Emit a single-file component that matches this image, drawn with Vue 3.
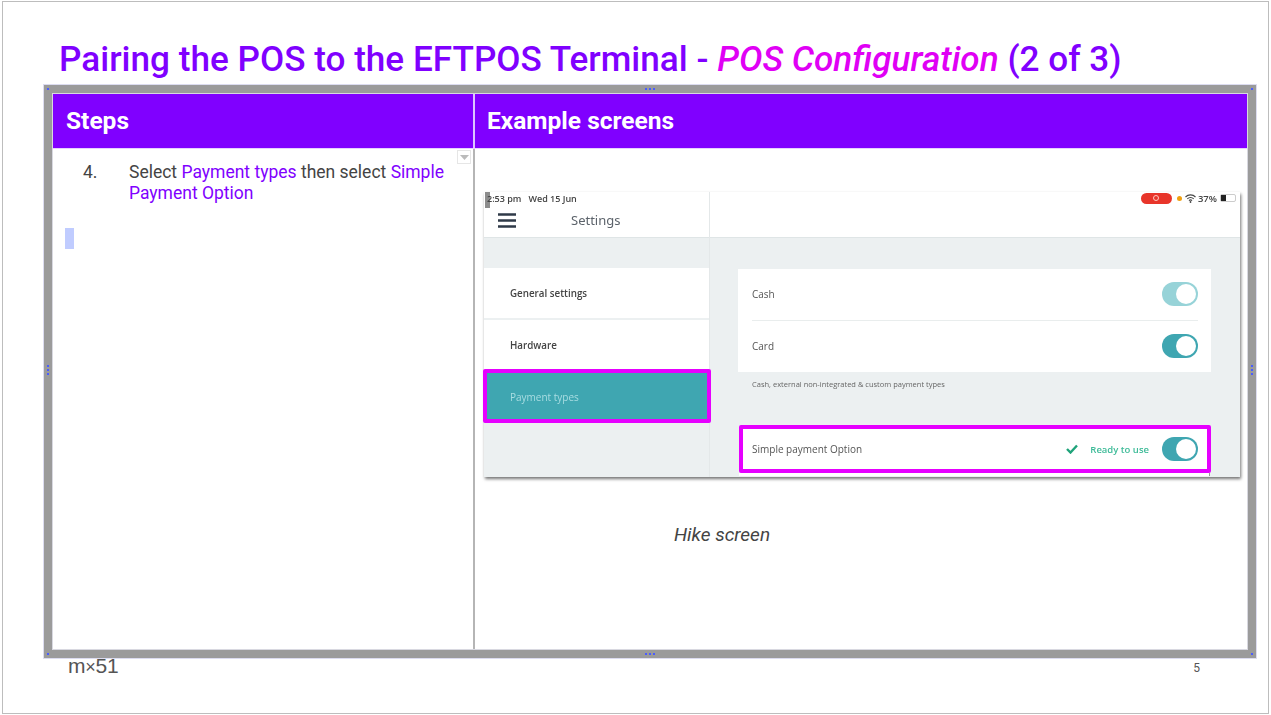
<script setup>
const menu = ['General settings', 'Hardware']
</script>

<template>
  <div class="slide">
    <h1 class="title">Pairing the POS to the EFTPOS Terminal - <em>POS Configuration</em> (2 of 3)</h1>
    <div class="frame">
      <i class="h tl"></i><i class="h tr"></i><i class="h bl"></i><i class="h br"></i>
      <i class="dots top"></i><i class="dots bottom"></i><i class="dots vert left"></i><i class="dots vert right"></i>
      <div class="table">
        <div class="th first">Steps</div>
        <div class="th">Example screens</div>
        <div class="td steps">
          <span class="caret-btn"><svg width="9" height="5" viewBox="0 0 9 5"><path d="M0 0h9L4.500 5z" fill="#bbb"/></svg></span>
          <div class="step"><span class="num">4.</span><p>Select <b>Payment types</b> then select <b>Simple Payment Option</b></p></div>
          <div class="sel"></div>
        </div>
        <div class="td examples">
          <div class="screen">
            <span class="grab"></span>
            <div class="side">
              <div class="status"><span class="st">2:53 pm&nbsp;&nbsp;&nbsp;Wed 15 Jun</span></div>
              <div class="bar">
                <svg class="burger" width="18" height="15" viewBox="0 0 18 15"><path d="M0 1.500h18M0 7.500h18M0 13.500h18" stroke="#2f3a48" stroke-width="2.400"/></svg>
                <span class="bar-title">Settings</span>
              </div>
              <div class="spacer"></div>
              <div v-for="m in menu" :key="m" class="menu-item"><span class="bl-t">{{ m }}</span></div>
              <div class="menu-active"><span class="bl-t">Payment types</span></div>
            </div>
            <div class="main">
              <div class="status right">
                <span class="rec"><i></i></span><span class="dot"></span>
                <svg class="wifi" width="11" height="9" viewBox="0 0 11 9"><path d="M.5 3a7 7 0 0 1 10 0M2.300 4.800a4.500 4.500 0 0 1 6.400 0M4 6.600a2 2 0 0 1 3 0" fill="none" stroke="#444" stroke-width="1.100"/><circle cx="5.500" cy="8" r=".9" fill="#444"/></svg>
                <span class="st pct">37%</span>
                <span class="batt"><i></i></span>
              </div>
              <div class="bar"></div>
              <div class="content">
                <div class="card">
                  <div class="row first"><span class="bl-t">Cash</span><span class="tog light"><i></i></span></div>
                  <div class="row"><span class="bl-t">Card</span><span class="tog"><i></i></span></div>
                </div>
                <p class="hint"><span class="bl-t">Cash, external non-integrated &amp; custom payment types</span></p>
                <div class="simple">
                  <span class="bl-t">Simple payment Option</span>
                  <svg class="check" width="12" height="10" viewBox="0 0 12 10"><path d="M1 5l3.500 3.500L11 1.500" fill="none" stroke="#1fa37a" stroke-width="2.400"/></svg>
                  <span class="ready bl-t">Ready to use</span>
                  <span class="tog"><i></i></span>
                </div>
                <div class="under"></div>
              </div>
            </div>
          </div>
          <div class="caption">Hike screen</div>
        </div>
      </div>
    </div>
    <div class="footer">
      <span class="logo">m<small>×</small>51</span>
      <span class="page">5</span>
    </div>
  </div>
</template>

<style>
html, body { margin: 0; background: #fff; overflow: hidden; }
</style>

<style scoped>
.slide {
  box-sizing: border-box;
  width: 1267px;
  height: 713px;
  margin: 1px 0 0 2px;
  border: 1px solid #bdbdbd;
  padding: 0 0 0 40px;
  font-family: Roboto, sans-serif;
  background: #fff;
}
.title {
  height: 82px;
  margin: 0;
  padding: 36px 0 0 16px;
  box-sizing: border-box;
  font-size: 35.150px;
  line-height: 43px;
  font-weight: 500;
  color: #8000ff;
  white-space: nowrap;
}
.title em { color: #e000f5; font-style: italic; }

.frame {
  position: relative;
  box-sizing: border-box;
  width: 1214px;
  height: 575px;
  background: #9b9b9b;
  border: 1px solid #dcdcf0;
  padding: 8px;
}
.h { position: absolute; width: 2px; height: 2px; background: #4a5cff; }
.tl { left: 3px; top: 3px; }
.tr { right: 3px; top: 3px; }
.bl { left: 3px; bottom: 3px; }
.br { right: 3px; bottom: 3px; }
.dots { position: absolute; width: 2px; height: 2px; background: #4a5cff; }
.dots.top, .dots.bottom { left: 605px; box-shadow: -4px 0 #4a5cff, 4px 0 #4a5cff; }
.dots.top { top: 3px; }
.dots.bottom { bottom: 3px; }
.dots.vert { top: 284px; box-shadow: 0 -4px #4a5cff, 0 4px #4a5cff; }
.dots.left { left: 3px; }
.dots.right { right: 3px; }

.table {
  display: grid;
  grid-template-columns: 422px 1fr;
  grid-template-rows: 55px 1fr;
  height: 100%;
  background: #fff;
  border: 1px solid #d8d8e0;
  box-sizing: border-box;
}
.th {
  background: #8000ff;
  color: #fff;
  font-size: 24.500px;
  font-weight: 700;
  line-height: 54px;
  padding-left: 12px;
  border-bottom: 1px solid #e6d0ff;
  box-sizing: border-box;
}
.th.first { border-right: 2px solid #dcc4ff; padding-left: 13px; }
.td.steps {
  position: relative;
  border-right: 2px solid #b5b5b5;
  padding: 13px 0 0 30px;
  color: #444;
  font-size: 17.500px;
  line-height: 21px;
}
.caret-btn {
  position: absolute;
  top: 1px;
  right: 2px;
  width: 12px;
  height: 12px;
  border: 1px solid #e6e6e6;
  display: flex;
  align-items: center;
  justify-content: center;
}
.step { display: flex; }
.num { width: 46px; flex: none; }
.step p { margin: 0; width: 324px; }
.step b { font-weight: 400; color: #8000ff; }
.sel { width: 9px; height: 21px; background: #c0ccff; margin: 24px 0 0 -18px; }

.examples { padding: 43px 7px 0 9px; min-width: 0; color: #444; }
.screen {
  position: relative;
  display: flex;
  width: 756px;
  height: 285px;
  background: #ecf0f1;
  box-shadow: 1px 2px 3px rgba(0,0,0,.55);
  font-family: "Open Sans", sans-serif;
  font-size: 10px;
  color: #555;
}
.grab { position: absolute; left: 1px; top: 0; width: 5px; height: 16px; background: #8c8c8c; }
.bl-t { filter: blur(.45px); }
.side { width: 225px; flex: none; border-right: 1px solid #e4e8e9; display: flex; flex-direction: column; }
.main { flex: 1; display: flex; flex-direction: column; min-width: 0; }
.status { height: 12px; padding: 0 0 3px 3px; background: #fff; display: flex; align-items: center; }
.st { font-size: 9px; font-weight: 600; color: #444; filter: blur(.3px); white-space: nowrap; }
.status.right { justify-content: flex-end; gap: 3px; padding: 0 4px 3px 0; }
.pct { font-size: 9.500px; }
.rec { width: 31px; height: 11px; border-radius: 6px; background: #e8352a; display: flex; align-items: center; justify-content: center; margin-right: 2px; }
.rec i { width: 4px; height: 4px; border-radius: 50%; border: 1px solid #ffc9c0; }
.dot { width: 5px; height: 5px; border-radius: 50%; background: #f0a010; }
.wifi { margin-right: -1px; }
.batt { width: 16px; height: 8px; border: 1px solid #ccc; border-radius: 2px; box-sizing: border-box; }
.batt i { display: block; width: 5px; height: 6px; background: #222; }
.bar { height: 26px; padding-bottom: 4px; background: #fff; border-bottom: 1px solid #dfe5e6; display: flex; align-items: center; flex: none; }
.burger { margin-left: 14px; }
.bar-title { margin-left: 55px; font-size: 13px; color: #5c636b; filter: blur(.35px); font-family: "Noto Sans", sans-serif; }
.spacer { height: 30px; flex: none; }
.menu-item { height: 50px; margin-bottom: 2px; background: #fff; display: flex; align-items: center; padding-left: 26px; color: #444; font-weight: 600; font-size: 9.800px; flex: none; }
.menu-active {
  box-sizing: border-box;
  height: 54px;
  width: 228px;
  margin: -3px 0 0 -1px;
  position: relative;
  background: #3fa6b1;
  border: 4px solid #e600ff;
  border-radius: 2px;
  display: flex;
  align-items: center;
  padding: 1px 0 0 23px;
  color: #a9dde2;
  flex: none;
}
.content { padding: 31px 29px 0 28px; }
.card { background: #fff; }
.row { box-sizing: border-box; height: 51px; padding-bottom: 1px; margin: 0 13px 0 14px; display: flex; align-items: center; justify-content: space-between; }
.row.first { height: 52px; padding-bottom: 2px; border-bottom: 1px solid #e9eded; }
.tog {
  position: relative;
  display: block;
  box-sizing: border-box;
  width: 36px;
  height: 24px;
  border-radius: 12px;
  background: #3fa6b1;
  flex: none;
}
.tog.light { background: #97d3d8; }
.tog i { position: absolute; right: 2px; top: 2px; width: 20px; height: 20px; border-radius: 50%; background: #fff; }
.hint { margin: 0; padding: 6px 0 0 14px; font-size: 7.500px; line-height: 12px; color: #666; height: 47px; box-sizing: content-box; }
.simple {
  box-sizing: border-box;
  width: 472px;
  height: 48px;
  margin: 0 0 0 1px;
  background: #fff;
  border: 4px solid #e600ff;
  border-radius: 2px;
  display: flex;
  align-items: center;
  padding: 0 9px;
  color: #555;
}
.check { margin-left: auto; }
.ready { color: #3dbb98; margin: 0 13px 0 12px; font-weight: 600; font-size: 9.500px; }
.under { height: 3px; width: 470px; margin-left: 1px; background: #fff; border-right: 1px solid #999; }

.caption { margin-top: 47px; text-align: center; font-style: italic; font-size: 19px; line-height: 21px; width: 476px; }

.footer { display: flex; justify-content: space-between; padding: 0 57px 0 25px; width: 1214px; box-sizing: border-box; }
.logo { margin-top: -1px; font-family: "Liberation Sans", sans-serif; font-size: 21px; line-height: 15px; color: #555; letter-spacing: -.2px; }
.logo small { font-size: 18px; }
.page { font-size: 12px; line-height: 18px; color: #555; }
</style>
